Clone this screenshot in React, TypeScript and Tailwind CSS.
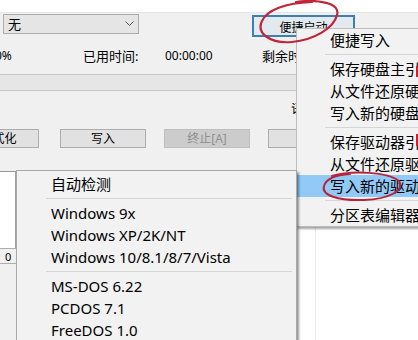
import React from "react";

function MenuItem({ children, hl }: { children: React.ReactNode; hl?: boolean }) {
  return (
    <div
      className={
        hl
          ? "h-[22px] flex items-center pl-[33px] text-[15px] leading-none whitespace-nowrap bg-[#91c9f7]"
          : "h-[22px] flex items-center pl-[33px] text-[15px] leading-none whitespace-nowrap"
      }
    >
      {children}
    </div>
  );
}

function Sep() {
  return (
    <div className="h-[7px] flex items-center pl-[28px] pr-[4px]">
      <div className="h-px flex-1 bg-[#d5d5d5]" />
    </div>
  );
}

export default function App() {
  return (
    <div className="relative w-[418px] h-[340px] overflow-hidden bg-[#f0f0f0] text-black font-[family-name:'Noto_Sans','Noto_Sans_CJK_SC',sans-serif]">
      <div className="h-[13px] bg-white border-b border-[#e6e6e6]" />

      <div className="flex items-start mt-[1px]">
        <div className="ml-[3px] w-[136px] h-[20px] shrink-0 border border-[#adadad] bg-[#e5e5e5] flex items-center justify-between pl-[4px] pr-[4px] text-[13px] leading-none">
          <span>无</span>
          <svg width="9" height="6" viewBox="0 0 9 6">
            <polyline points="0.5,0.5 4.5,4.5 8.5,0.5" fill="none" stroke="#555" strokeWidth="1" />
          </svg>
        </div>
        <div className="ml-[113px] mt-[1px] w-[103px] h-[22px] shrink-0 border-2 border-[#3c7fb1] bg-[#e2e9ef] flex items-center justify-center pt-[4px] text-[12px] leading-none">
          便捷启动
        </div>
      </div>

      <div className="mt-[11px] h-[16px] flex items-center text-[13px] leading-none whitespace-nowrap">
        <span className="ml-[-5px] w-[88px] shrink-0 text-[12px]">0%</span>
        <span className="w-[82px] shrink-0">已用时间:</span>
        <span className="w-[97px] shrink-0 text-[12px]">00:00:00</span>
        <span className="shrink-0">剩余时间:</span>
      </div>

      <div className="mt-[10px] h-[17px] border-y border-[#c9c9c9] bg-[#e6e6e6]" />

      <div className="mt-[9px] h-[16px] pl-[291px] text-[13px] leading-[16px]">语</div>

      <div className="mt-[13px] flex h-[19px] text-[12px] leading-none whitespace-nowrap">
        <div className="ml-[-42px] w-[81px] shrink-0 border border-[#adadad] bg-[#e1e1e1] flex items-center justify-center">
          格式化
        </div>
        <div className="ml-[21px] w-[86px] shrink-0 border border-[#adadad] bg-[#e1e1e1] flex items-center justify-center">
          写入
        </div>
        <div className="ml-[18px] w-[86px] shrink-0 border border-[#bfbfbf] bg-[#cccccc] text-[#8f8f8f] flex items-center justify-center">
          终止[A]
        </div>
        <div className="ml-[18px] w-[86px] shrink-0 border border-[#adadad] bg-[#e1e1e1] flex items-center justify-center">
          返回
        </div>
      </div>

      <div className="mt-[23px] flex h-[170px]">
        <div className="w-[16px] shrink-0 flex flex-col">
          <div className="h-[77px] bg-white border-t border-t-[#8c9c90] border-r border-r-[#a0a0a0]" />
          <div className="h-[16px] border-y border-[#adadad] bg-[#f0f0f0] text-[11px] leading-none flex items-center pl-[5px]">
            0
          </div>
        </div>
        <div className="flex-1 bg-white pl-[299px]">
          <div className="h-full border-l border-[#ececec]" />
        </div>
      </div>

      {/* context menu */}
      <div className="absolute left-[296px] top-[28px] w-[200px] z-10 bg-[#f2f2f2] border border-[#bdbdbd] shadow-[2px_2px_2px_rgba(0,0,0,0.35)]">
        <MenuItem>便捷写入</MenuItem>
        <Sep />
        <MenuItem>保存硬盘主引导记录(MBR)...</MenuItem>
        <MenuItem>从文件还原硬盘主引导记录(MBR)...</MenuItem>
        <MenuItem>写入新的硬盘主引导记录(MBR)</MenuItem>
        <Sep />
        <MenuItem>保存驱动器引导扇区...</MenuItem>
        <MenuItem>从文件还原驱动器引导扇区...</MenuItem>
        <MenuItem hl>写入新的驱动器引导扇区</MenuItem>
        <Sep />
        <MenuItem>分区表编辑器</MenuItem>
      </div>

      {/* submenu */}
      <div className="absolute left-[16px] top-[170px] w-[281px] h-[200px] z-20 bg-[#f2f2f2] border border-[#a8a8a8] pt-[2px] shadow-[2px_2px_2px_rgba(0,0,0,0.4)]">
        <div className="pl-[1px]">
          <MenuItem>自动检测</MenuItem>
          <Sep />
          <MenuItem>Windows 9x</MenuItem>
          <MenuItem>Windows XP/2K/NT</MenuItem>
          <MenuItem>Windows 10/8.1/8/7/Vista</MenuItem>
          <Sep />
          <MenuItem>MS-DOS 6.22</MenuItem>
          <MenuItem>PCDOS 7.1</MenuItem>
          <MenuItem>FreeDOS 1.0</MenuItem>
        </div>
      </div>

      {/* red hand-drawn annotations */}
      <svg className="absolute left-0 top-0 z-30 pointer-events-none" width="418" height="340" viewBox="0 0 418 340">
        <path
          d="M 296 2 C 318 -1, 341 3, 337 15 C 334 28, 314 40, 292 42 C 270 44, 256 33, 262 21 C 267 10, 285 3, 312 2"
          fill="none"
          stroke="#c0263a"
          strokeWidth="2.2"
          strokeLinecap="round"
        />
        <path
          d="M 332 176 C 352 170, 388 172, 399 181 C 405 190, 390 199, 364 200 C 338 201, 321 195, 324 186 C 326 179, 336 175, 350 174"
          fill="none"
          stroke="#b8233a"
          strokeWidth="2"
          strokeLinecap="round"
        />
        <rect x="416" y="66" width="2" height="11" fill="#d02030" />
        <rect x="416" y="134" width="2" height="12" fill="#d02030" />
      </svg>
    </div>
  );
}
